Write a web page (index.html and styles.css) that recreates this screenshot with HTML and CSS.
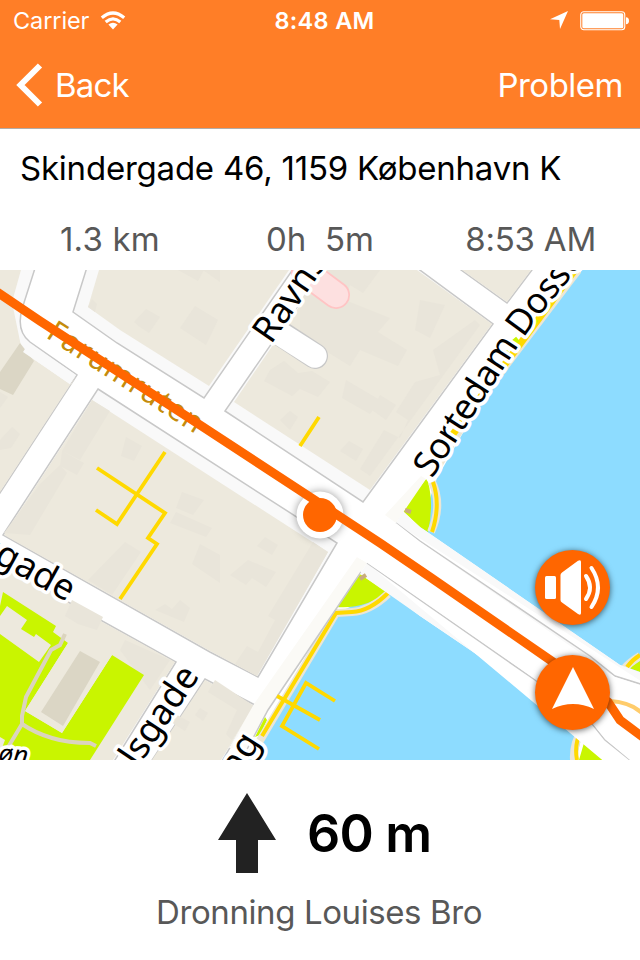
FILE: index.html
```html
<!DOCTYPE html>
<html lang="en">
<head>
<meta charset="utf-8">
<title>Navigation</title>
<link rel="stylesheet" href="styles.css">
</head>
<body>
<div class="app">
  <header class="top">
    <div class="status">
      <div class="carrier"><span>Carrier</span>
        <svg width="26" height="20" viewBox="0 0 26 20"><g fill="none" stroke="#fff" stroke-width="3.2"><path d="M1.8 6.8Q13-2.8 24.2 6.8"/><path d="M5.7 11Q13 4.7 20.3 11"/></g><path fill="#fff" d="M8.4 13.5Q13 9.8 17.6 13.5L13 18.5Z"/></svg>
      </div>
      <div class="clock">8:48 AM</div>
      <div class="indicators">
        <svg width="18" height="19" viewBox="0 0 18 19"><path fill="#fff" d="M0 8.2L18 0L10 18L9.3 9Z"/></svg>
        <svg width="50" height="20" viewBox="0 0 50 20"><rect x=".75" y=".75" width="44" height="18" rx="3" fill="none" stroke="#fff" stroke-width="1.1"/><rect x="2.3" y="2.3" width="41" height="15" rx="1.5" fill="#fff"/><path fill="#fff" d="M46 6.3Q49 6.500 49 9.8T46 13.3Z"/></svg>
      </div>
    </div>
    <nav class="bar">
      <div class="back">
        <svg width="27" height="44" viewBox="0 0 27 44"><path d="M24 2.500L4.500 22L24 41.500" fill="none" stroke="#fff" stroke-width="6"/></svg>
        <span>Back</span>
      </div>
      <span class="problem">Problem</span>
    </nav>
  </header>
  <section class="trip">
    <div class="address">Skindergade 46, 1159 København K</div>
    <div class="stats"><span class="dist">1.3 km</span><span class="dur">0h&nbsp; 5m</span><span class="eta">8:53 AM</span></div>
  </section>
  <main class="map">
    <svg class="canvas" width="640" height="490" viewBox="0 270 640 490">
      <rect y="270" width="640" height="490" fill="#fff"/>
      <!-- water -->
      <g fill="#8ddcff">
        <path d="M582 270H640V673L620 665L420 527L437 478L475 412Z"/>
        <path d="M335 614L386 590L420 616L535 694L583 730L576 760H240L262 736Z"/>
      </g>
      <!-- pavement under the blocks -->
      <g class="walk">
        <path d="M0 262H37L22 309Q16 331 30 342L77 375L0 493Z"/>
        <path d="M88 264L73 312L117 343L204 398L298 262Z"/>
        <path d="M98 389L337 543L258 677L210 652L3 535Z"/>
        <path d="M225 411L363 502L493 324L409 262H328Z"/>
        <path d="M450 262L507 303L538 262Z"/>
        <path d="M-3 560L68 602L176 662L110 768H-3Z"/>
        <path d="M255 705L205 679L147 768H218Z"/>
      </g>
      <!-- blocks -->
      <g fill="#ede9dd">
        <path d="M0 270H21L12 302L22 351L71 385L76 376L0 492Z"/>
        <path d="M99 270L88 307L120 330L209 386L289 270Z"/>
        <path d="M92 400L328 552L257 676L210 651L4 535Z"/>
        <path d="M234 402L370 490L492 324L417 270H324Z"/>
        <path d="M462 270L507 302L531 270Z"/>
        <path d="M0 563L68 603L175 662L113 760H0Z"/>
        <path d="M254 706L205 680L152 760H221Z"/>
      </g>
      <g fill="#e9e5da">
        <path d="M178 270H204L198 281ZM203 270H220V282ZM134 322L146 309L160 317L149 333L140 327ZM195 306L218 320L206 345L180 328ZM88 307L92 299L97 304L95 312Z"/>
        <path d="M0 440L12 427L20 434L11 448L0 450ZM0 392L8 397L0 408Z"/>
        <path d="M92 400L110 411L80 460L62 451ZM126 437L142 446L134 461L121 456ZM62 451L84 463L77 475L60 466ZM40 484L60 465L67 473L30 535L4 533ZM182 492L204 500L193 515L176 508ZM125 542L141 552L112 595L88 580ZM176 512L212 528L206 537L170 523ZM200 544L220 555V583L192 564ZM155 610L165 604L172 609L180 600L190 608L184 622ZM265 537L278 545L272 555L257 546ZM248 560L276 572L266 587L252 578L246 585L230 575ZM313 542L328 552L257 676L235 664L247 646L258 652L275 620L268 616Z"/>
        <path d="M300 270H380L363 293L350 285L345 300L390 318L378 332L407 350L398 366L360 350L350 366L300 335ZM270 370L284 361L298 373L312 371L330 382L318 397L300 389L292 396L264 381ZM280 420L290 411L298 417L290 430ZM346 380L380 400L370 414L342 398ZM380 395L396 405L386 420L372 410ZM349 441L363 449L356 461L340 451ZM420 300L445 305L430 338L415 330ZM433 350L475 320L480 325L370 476L360 469L384 430L400 438L408 420L396 412L415 382L440 375Z"/>
        <path d="M65 616L72 600L103 617L97 630L78 624ZM125 640L170 660L150 690L120 650ZM215 680L254 706L232 740L226 734L237 710L208 692ZM177 715L190 722L185 731L171 722ZM200 708L208 713L203 721L195 715Z"/>
      </g>
      <path fill="#dbd6c5" d="M0 372L20 343L34 361L13 395L0 389Z"/>
      <path fill="#f9f9f9" d="M23 352L29 343L76 375L70 384Z"/>
      <!-- cul-de-sacs -->
      <path d="M277 331L315 356" stroke="#c8c8c8" stroke-width="26" stroke-linecap="round"/>
      <path d="M271 328L315 356" stroke="#fff" stroke-width="23.5" stroke-linecap="round"/>
      <path d="M305 272L336 295" stroke="#ffc4c4" stroke-width="28" stroke-linecap="round"/>
      <path d="M305 272L336 295" stroke="#fde0e0" stroke-width="24.5" stroke-linecap="round"/>
      <path d="M289 290L306 262L322 264L286 326L268 322Z" fill="#fff"/>
      <!-- parks -->
      <g fill="#c9f500">
        <path d="M3 592L56 626L53 632L68 643L25 711L62 733L112 655L144 675L90 760H0V606Z"/>
        <path d="M426 479L402 510L420 527L428 532Q434 504 428 482Z"/>
        <path d="M360 574L387 592Q366 609 337 607Z"/>
        <path d="M640 661L629 668L640 672ZM586 736L612 760H579Z"/>
        <path d="M265 717L255 737L260 735L267 720Z"/>
      </g>
      <g fill="#ede9dd">
        <path d="M7 606L27 620L21 629L34 637L36 634L51 645L39 662L0 634V616Z"/>
        <path d="M68 643L112 655L62 733L25 711Z"/>
        <path d="M0 737L5 740L2 748H0Z"/>
      </g>
      <path fill="#dbd6c5" d="M80 651L100 662L63 726L41 712Z"/>
      <path d="M65 634L60 645L51 650L26 697L22 716V724L7 749M22 724Q35 733 52 738Q68 743 90 743L96 746" fill="none" stroke="#dbd4be" stroke-width="4"/>
      <!-- shores -->
      <g fill="none" stroke="#ebe6d6" stroke-width="8">
        <path d="M578 270L472 410L433 474M432 482Q443 505 431 532M388 594Q370 611 352 612L336 613L258 744M640 656Q630 662 624 669M582 730Q573 744 574 760"/>
      </g>
      <g fill="none" stroke="#ffd900" stroke-width="4">
        <path stroke-width="7" d="M575 270L453 434"/>
        <path d="M433 482Q441 505 432 532M388 593Q370 611 352 612L336 613L262 736M640 655Q632 660 627 667M581 731Q574 744 577 760"/>
      </g>
      <!-- trees along the quay -->
      <path d="M498 366L501 362M505 356L509 352M512 344L518 339M533 324L536 319" fill="none" stroke="#c9f500" stroke-width="6"/>
      <!-- quay band and bridge -->
      <path fill="#fbfaf6" d="M357 557L367 563L330 618L268 711L247 748L229 748L254 704ZM385 515L421 476L426 479L396 523Z"/>
      <path fill="none" stroke="#c8c8c8" stroke-width="1.5" d="M361 572L330 618L268 710L244 755"/>
      <path fill="#f9f9f9" d="M403 512L420 527L620 665L640 672V760H610L597 751L583 730L535 694L420 616L360 574L367 563L396 523Z"/>
      <path fill="#fff" stroke="#c8c8c8" stroke-width="1.5" d="M650 800L630 760L605 740L593 725L535 680L420 600L367 563M396 523L420 541L590 656L615 676L650 687"/>
      <path fill="#fff" d="M357 557L396 523L420 542L615 677L640 685V760H630L605 739L593 724L535 679L420 599L366 562Z"/>
      <path d="M610 701Q630 702 642 713" fill="none" stroke="#ffcc6b" stroke-width="4"/>
      <!-- footpaths -->
      <g fill="none" stroke="#ffd900" stroke-width="3.8">
        <path d="M165 452L117 524L96 510M97 468L165 513L148 538L157 544L120 599M319 417L300 446"/>
        <path d="M335 701L306 683L282 726L319 749M277 696L320 720"/>
      </g>
      <path d="M360 579L366 575M405 510L411 512" stroke="#c9ad7c" stroke-width="4"/>
      <!-- street names -->
      <text class="route-name" transform="translate(45 337) rotate(32.8)" textLength="179">Farumruten</text>
      <g class="street">
        <text transform="translate(271 345) rotate(-55.5)">Ravns</text>
        <path id="quay" fill="none" stroke="none" d="M432 479L523 339Q550 300 600 244"/>
        <text class="long"><textPath href="#quay">Sortedam Dosser</textPath></text>
        <text text-anchor="end" transform="translate(67 602) rotate(29)">sgade</text>
        <text text-anchor="end" transform="translate(200 676) rotate(-56)">elsgade</text>
        <text text-anchor="end" transform="translate(261 742) rotate(-58)">ng</text>
        <text class="small" transform="translate(-2 762) rotate(5)">øn</text>
      </g>
      <circle class="ring" cx="320" cy="515" r="23.500"/>
      <path d="M-6 290L40 321L200 425L310 497L380 543L430 577L553 662L608 702L620 720L644 738" fill="none" stroke="#f60" stroke-width="9"/>
      <circle cx="320" cy="515" r="17" fill="#f60"/>
    </svg>
    <div class="fab sound">
      <svg width="75" height="75" viewBox="0 0 75 75" fill="#fff"><rect x="10" y="26" width="11" height="23" rx="1.5"/><path d="M25.5 25Q25.5 23.5 27 22.5L43 10.8Q46 9 46 12V63Q46 66 43 64L27 52.5Q25.5 51.5 25.5 50Z"/><path d="M51 26Q59 37.500 51 49M56.500 18Q69.500 37.500 56.500 57" fill="none" stroke="#fff" stroke-width="4" stroke-linecap="round"/></svg>
    </div>
    <div class="fab locate">
      <svg width="75" height="75" viewBox="0 0 75 75"><path d="M38 12L59 54Q38 44 17 54Z" fill="#fff"/></svg>
    </div>
  </main>
  <footer class="turn">
    <div class="step">
      <svg width="58" height="80" viewBox="0 0 58 80"><path d="M29 0L58 47H40V80H18V47H0Z" fill="#222"/></svg>
      <span class="meters">60 m</span>
    </div>
    <div class="road">Dronning Louises Bro</div>
  </footer>
</div>
</body>
</html>
```
FILE: styles.css
```css
* { box-sizing: border-box; }
body { margin: 0; background: #fff; font-family: Inter, "Liberation Sans", sans-serif; }
svg { display: block; flex: none; }
.app { width: 640px; height: 960px; display: flex; flex-direction: column; overflow: hidden; }
.top { height: 129px; background: #ff7e27; border-bottom: 1px solid #b2aca8; color: #fff; }
.status { height: 41px; padding: 0 10px 0 13px; display: grid; grid-template-columns: 1fr auto 1fr; align-items: center; line-height: 41px; }
.carrier { display: flex; align-items: center; gap: 11px; font-size: 23.5px; letter-spacing: -.1px; }
.clock { padding-left: 6px; font-weight: 600; font-size: 23.500px; letter-spacing: .3px; }
.indicators { display: flex; justify-content: flex-end; align-items: center; gap: 12px; }
.bar { height: 87px; padding: 0 17px 0 16px; display: flex; justify-content: space-between; align-items: center; font-size: 33px; letter-spacing: -.5px; }
.back { display: flex; align-items: center; gap: 12px; letter-spacing: -.8px; }
.trip { height: 141px; }
.address { height: 79px; padding-left: 20px; font-size: 33px; line-height: 79px; letter-spacing: -.22px; white-space: nowrap; }
.stats { height: 62px; padding: 0 44px 0 60px; display: grid; grid-template-columns: 206px 1fr auto; font-size: 33px; line-height: 62px; color: #585858; }
.dist { letter-spacing: .2px; }
.eta { letter-spacing: -.2px; }
.map { position: relative; height: 490px; overflow: hidden; }
.walk { fill: #f9f9f9; stroke: #c8c8c8; stroke-width: 1.5; }
.street { font: 36px "Noto Sans", "Open Sans", sans-serif; fill: #000; stroke: #fff; stroke-width: 7px; stroke-linejoin: round; paint-order: stroke; }
.street .long { font-size: 35.500px; letter-spacing: -.5px; }
.street .small { font-size: 26px; font-style: italic; }
.route-name { font: 30px "Noto Sans", "Open Sans", sans-serif; fill: #c48c0c; }
.ring { fill: #fff; filter: drop-shadow(0 0 4px rgba(0,0,0,.4)); }
.fab { position: absolute; left: 535px; width: 75px; height: 75px; border-radius: 50%; background: #f60; box-shadow: 0 1px 6px rgba(0,0,0,.6); }
.sound { top: 280px; }
.locate { top: 385px; }
.turn { height: 200px; padding-top: 33px; }
.step { display: flex; align-items: center; padding-left: 218px; gap: 31px; height: 80px; }
.meters { font-size: 52px; font-weight: 600; letter-spacing: -.8px; }
.road { padding-left: 156px; margin-top: 19px; font-size: 33px; line-height: 40px; letter-spacing: -.4px; color: #585858; white-space: nowrap; }
```
